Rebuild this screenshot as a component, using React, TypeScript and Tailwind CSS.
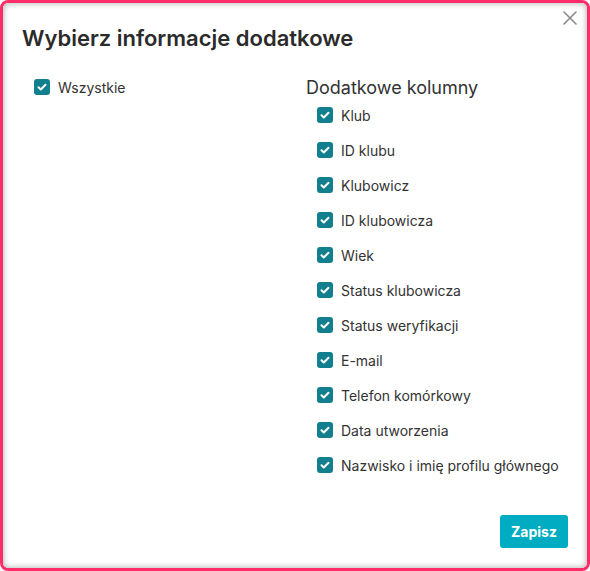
import React from 'react';

const columns = [
  'Klub',
  'ID klubu',
  'Klubowicz',
  'ID klubowicza',
  'Wiek',
  'Status klubowicza',
  'Status weryfikacji',
  'E-mail',
  'Telefon komórkowy',
  'Data utworzenia',
  'Nazwisko i imię profilu głównego',
];

const CheckBox: React.FC = () => (
  <span className="w-4 h-4 rounded-[3px] bg-[#127f8f] flex items-center justify-center shrink-0">
    <svg className="w-3 h-3" viewBox="0 0 12 12" fill="none" stroke="white" strokeWidth={2} strokeLinecap="round" strokeLinejoin="round">
      <path d="M2.5 6.3l2.3 2.2 4.7-4.8" />
    </svg>
  </span>
);

export default function App() {
  return (
    <div className="w-[590px] h-[571px] bg-white" style={{ fontFamily: 'Inter, "Noto Sans", sans-serif' }}>
      <div className="w-full h-full border-[3px] border-[#ff2c69] rounded-[8px] overflow-hidden">
        <div className="relative w-full h-full bg-white rounded-[5px] shadow-[inset_0_0_6px_rgba(0,0,0,0.35)] flex flex-col">
          <button className="absolute right-[8px] top-[6px] text-[#8a8a8a]">
            <svg className="w-[18px] h-[18px]" viewBox="0 0 18 18" fill="none" stroke="currentColor" strokeWidth={1.6} strokeLinecap="round">
              <path d="M3 3l12 12M15 3L3 15" />
            </svg>
          </button>
          <h1 className="pl-[19px] pt-[21px] text-[22px] font-semibold text-[#2b2b2b] leading-7">Wybierz informacje dodatkowe</h1>
          <div className="flex pt-[24px]">
            <div className="w-[303px] pl-[31px] pt-[1px]">
              <label className="flex items-center gap-2 h-5 text-[14px] text-[#333]">
                <CheckBox />
                Wszystkie
              </label>
            </div>
            <div className="flex-1">
              <h2 className="text-[18px] text-[#333] leading-6">Dodatkowe kolumny</h2>
              <div className="pl-[11px] pt-[5px] flex flex-col gap-[15px]">
                {columns.map((c) => (
                  <label key={c} className="flex items-center gap-2 h-5 text-[14px] text-[#333]">
                    <CheckBox />
                    {c}
                  </label>
                ))}
              </div>
            </div>
          </div>
          <div className="mt-auto flex justify-end pr-[19px] pb-[20px]">
            <button className="w-[68px] h-[33px] rounded-[3px] bg-[#00acc1] text-white text-[14px] font-bold">Zapisz</button>
          </div>
        </div>
      </div>
    </div>
  );
}
